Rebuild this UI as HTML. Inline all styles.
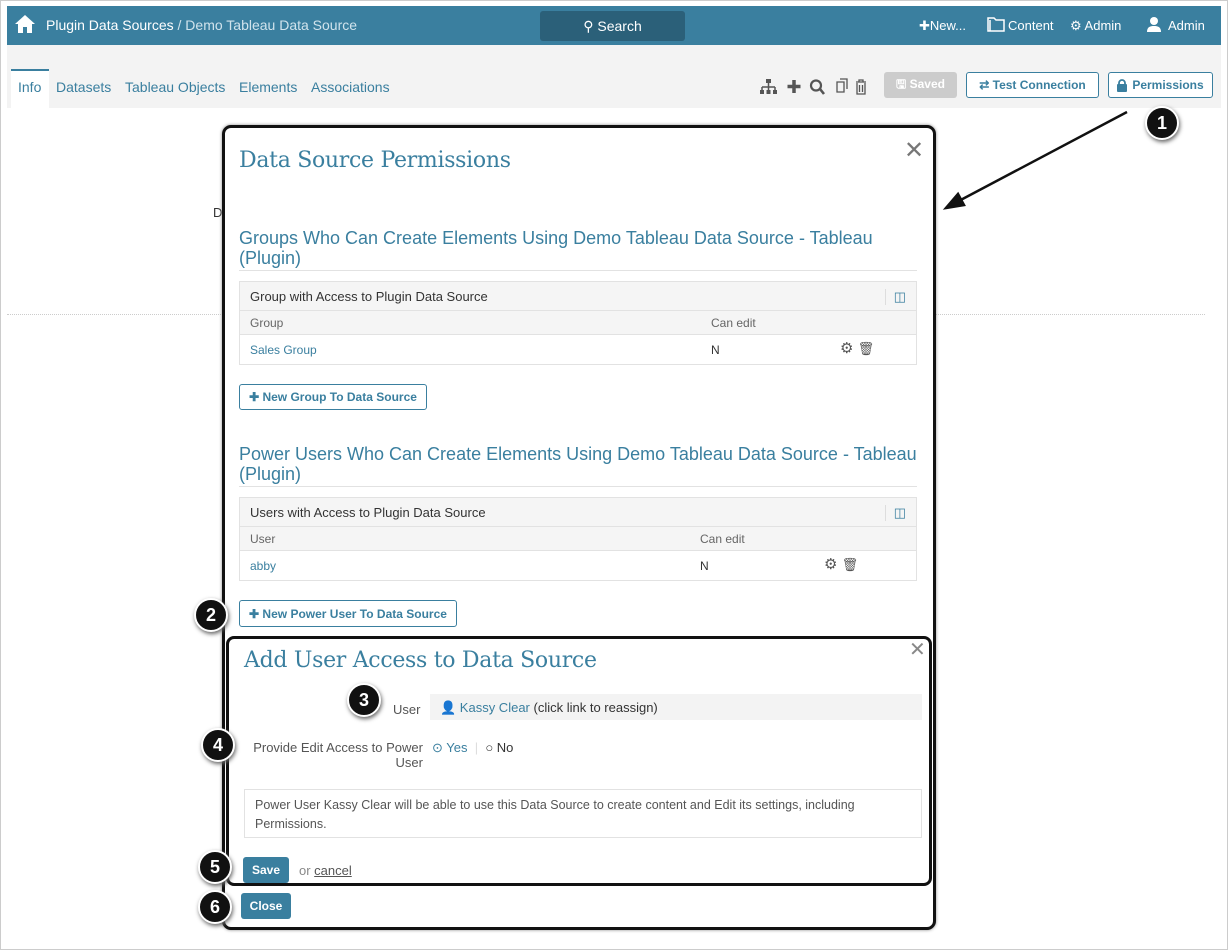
<!DOCTYPE html>
<html><head><meta charset="utf-8"><style>
*{box-sizing:border-box}
body{margin:0;width:1228px;height:950px;background:#fff;font-family:"Liberation Sans",sans-serif;position:relative;overflow:hidden;font-size:13px;color:#333}
.a{position:absolute;white-space:nowrap}
.frame{left:0;top:0;width:1228px;height:950px;border:1px solid #ccc}
.top{left:7px;top:6px;width:1214px;height:39px;background:#3a7f9f;color:#fff}
.gray{left:7px;top:45px;width:1214px;height:63px;background:#f3f3f3}
.tab{top:79px;font-size:14px;color:#3a7f9f}
.btn{border:1px solid #3a7f9f;border-radius:3px;color:#3a7f9f;font-weight:bold;font-size:12px;background:#fff;padding:0 8px;display:flex;align-items:center;justify-content:center;gap:5px;white-space:nowrap}
.modal{left:222px;top:125px;width:714px;height:805px;border:3px solid #111;border-radius:9px;background:#fff;box-shadow:0 0 3px #888}
.serif{font-family:"DejaVu Serif","Liberation Serif",serif;color:#3a7f9f;letter-spacing:-0.3px}
.h2{color:#3a7f9f;font-size:18px;line-height:20px;white-space:normal}
.tbl{border:1px solid #e2e2e2}
.num{width:34px;height:34px;border-radius:50%;background:#111;color:#fff;font-size:18px;font-weight:bold;display:flex;align-items:center;justify-content:center;border:2px solid #fff;box-shadow:1px 2px 4px #666}
.pbtn{background:#3a7f9f;color:#fff;font-weight:bold;font-size:12px;border-radius:3px;display:flex;align-items:center;justify-content:center}
</style></head><body>
<div class="a frame"></div>
<div class="a top">
 <svg class="a" style="left:7px;top:8px" width="22" height="20" viewBox="0 0 22 20"><path d="M11 1L1 10h3v9h5v-6h4v6h5v-9h3z" fill="#fff"/></svg>
 <div class="a" style="left:39px;top:11px;font-size:14px">Plugin Data Sources <span style="color:#d0e3ec">/ Demo Tableau Data Source</span></div>
 <div class="a" style="left:533px;top:5px;width:145px;height:30px;background:#2b6079;border-radius:3px;display:flex;align-items:center;justify-content:center;font-size:14px">⚲&nbsp;Search</div>
 <div class="a" style="left:912px;top:12px;font-size:13px">✚New...</div>
 <svg class="a" style="left:980px;top:11px" width="18" height="15"><path d="M1 1h6l2 2h8v11H1z M3 3v11" fill="none" stroke="#fff" stroke-width="1.5"/></svg>
 <div class="a" style="left:1001px;top:12px;font-size:13px">Content</div>
 <div class="a" style="left:1063px;top:12px;font-size:13px">⚙ Admin</div>
 <svg class="a" style="left:1139px;top:10px" width="16" height="16"><circle cx="8" cy="5" r="4" fill="#fff"/><path d="M1 16c0-5 3-6 7-6s7 1 7 6z" fill="#fff"/></svg>
 <div class="a" style="left:1161px;top:12px;font-size:13px">Admin</div>
</div>
<div class="a gray"></div>
<div class="a" style="left:11px;top:69px;width:38px;height:40px;background:#fff;border-top:2px solid #3a7f9f"></div>
<div class="a tab" style="left:18px">Info</div>
<div class="a tab" style="left:56px">Datasets</div>
<div class="a tab" style="left:125px">Tableau Objects</div>
<div class="a tab" style="left:239px">Elements</div>
<div class="a tab" style="left:311px">Associations</div>
<svg class="a" style="left:760px;top:78px" width="118" height="18" fill="#555" stroke="#555">
 <rect x="6" y="1" width="5" height="4" stroke="none"/><path d="M8.5 5v4M2 9h13M2 9v3M8.5 9v3M15 9v3" fill="none" stroke-width="1.5"/><rect x="0" y="12" width="4" height="4" stroke="none"/><rect x="6.5" y="12" width="4" height="4" stroke="none"/><rect x="13" y="12" width="4" height="4" stroke="none"/>
 <path d="M34 2v13M27.5 8.5h13" stroke-width="3.5" fill="none"/>
 <circle cx="56" cy="7.5" r="5" fill="none" stroke-width="2.2"/><path d="M60 11l4 5" stroke-width="2.6"/>
 <path d="M77 4h7v10h-7zM80 1h7v10" fill="none" stroke-width="1.3"/>
 <path d="M96 4h10M99 4v-2h4v2M97 5v11h8V5M99.5 7v7M102.5 7v7" fill="none" stroke-width="1.3"/>
</svg>
<div class="a pbtn" style="left:884px;top:72px;width:73px;height:26px;background:#ccc">🖫 Saved</div>
<div class="a btn" style="left:966px;top:72px;width:133px;height:26px">⇄ Test Connection</div>
<div class="a btn" style="left:1108px;top:72px;width:105px;height:26px"><svg width="10" height="13"><rect x="0" y="5" width="10" height="8" rx="1" fill="#3a7f9f"/><path d="M2 6V4a3 3 0 0 1 6 0v2" fill="none" stroke="#3a7f9f" stroke-width="1.8"/></svg>Permissions</div>
<div class="a" style="left:7px;top:314px;width:1198px;border-top:1px dotted #ccc"></div>
<div class="a" style="left:213px;top:205px;font-size:13px">D</div>
<svg class="a" style="left:0;top:0" width="1228" height="950"><g stroke="#111" stroke-width="2.5" fill="#111"><line x1="1127" y1="112" x2="955" y2="203"/><path d="M946 208l18-3-6-11z"/><line x1="466" y1="615" x2="505" y2="676"/><path d="M510 685l-2-16-10 6z"/></g></svg>
<div class="a num" style="left:1145px;top:106px">1</div>
<div class="a modal">
 <div class="a serif" style="left:14px;top:20px;font-size:22px">Data Source Permissions</div>
 <div class="a" style="left:679px;top:8px;font-size:24px;color:#777">✕</div>
 <div class="a h2" style="left:14px;top:100px;width:690px">Groups Who Can Create Elements Using Demo Tableau Data Source - Tableau (Plugin)</div>
 <div class="a" style="left:14px;top:142px;width:678px;border-top:1px solid #e2e2e2"></div>
 <div class="a tbl" style="left:14px;top:153px;width:678px;height:84px">
  <div style="height:29px;background:#f5f5f5;border-bottom:1px solid #e2e2e2;padding:7px 10px;font-size:13px">Group with Access to Plugin Data Source<span style="float:right;color:#3a7f9f;border-left:1px solid #ddd;padding-left:8px">◫</span></div>
  <div style="height:24px;background:#f5f5f5;border-bottom:1px solid #e2e2e2;padding:5px 10px;font-size:12px;color:#666;position:relative">Group<span class="a" style="left:471px;top:5px">Can edit</span></div>
  <div style="padding:8px 10px;font-size:12px;color:#3a7f9f;position:relative">Sales Group<span class="a" style="left:471px;top:8px;color:#333">N</span><span class="a" style="left:600px;top:4px;color:#555;font-size:15px">⚙ <span style="font-size:13px">🗑</span></span></div>
 </div>
 <div class="a btn" style="left:14px;top:256px;width:188px;height:26px">✚ New Group To Data Source</div>
 <div class="a h2" style="left:14px;top:316px;width:690px">Power Users Who Can Create Elements Using Demo Tableau Data Source - Tableau (Plugin)</div>
 <div class="a" style="left:14px;top:358px;width:678px;border-top:1px solid #e2e2e2"></div>
 <div class="a tbl" style="left:14px;top:369px;width:678px;height:84px">
  <div style="height:29px;background:#f5f5f5;border-bottom:1px solid #e2e2e2;padding:7px 10px;font-size:13px">Users with Access to Plugin Data Source<span style="float:right;color:#3a7f9f;border-left:1px solid #ddd;padding-left:8px">◫</span></div>
  <div style="height:24px;background:#f5f5f5;border-bottom:1px solid #e2e2e2;padding:5px 10px;font-size:12px;color:#666;position:relative">User<span class="a" style="left:460px;top:5px">Can edit</span></div>
  <div style="padding:8px 10px;font-size:12px;color:#3a7f9f;position:relative">abby<span class="a" style="left:460px;top:8px;color:#333">N</span><span class="a" style="left:584px;top:4px;color:#555;font-size:15px">⚙ <span style="font-size:13px">🗑</span></span></div>
 </div>
 <div class="a btn" style="left:14px;top:472px;width:218px;height:27px">✚ New Power User To Data Source</div>
 <div class="a pbtn" style="left:16px;top:765px;width:50px;height:26px">Close</div>
</div>
<div class="a" style="left:226px;top:636px;width:706px;height:250px;border:3px solid #111;border-radius:8px;background:#fff">
 <div class="a serif" style="left:15px;top:9px;font-size:22px">Add User Access to Data Source</div>
 <div class="a" style="left:680px;top:-2px;font-size:20px;color:#888">✕</div>
 <div class="a" style="left:164px;top:63px;font-size:13px;color:#555">User</div>
 <div class="a" style="left:201px;top:55px;width:492px;height:26px;background:#f3f3f3;padding:6px 10px;font-size:13px"><span style="color:#3a7f9f">👤 Kassy Clear</span> (click link to reassign)</div>
 <div class="a" style="left:20px;top:101px;width:174px;text-align:right;font-size:13px;color:#555;line-height:15px;white-space:normal">Provide Edit Access to Power User</div>
 <div class="a" style="left:203px;top:101px;font-size:13px;color:#3a7f9f">⊙ Yes <span style="color:#ddd">&nbsp;|&nbsp;</span> <span style="color:#333">○ No</span></div>
 <div class="a" style="left:15px;top:150px;width:678px;height:49px;border:1px solid #e2e2e2;padding:6px 10px;font-size:12.5px;color:#555;line-height:19px;white-space:normal">Power User Kassy Clear will be able to use this Data Source to create content and Edit its settings, including Permissions.</div>
 <div class="a pbtn" style="left:14px;top:218px;width:46px;height:26px">Save</div>
 <div class="a" style="left:70px;top:224px;font-size:13px;color:#888">or <u style="color:#555">cancel</u></div>
</div>
<div class="a num" style="left:194px;top:598px">2</div>
<div class="a num" style="left:347px;top:683px">3</div>
<div class="a num" style="left:201px;top:728px">4</div>
<div class="a num" style="left:198px;top:850px">5</div>
<div class="a num" style="left:198px;top:890px">6</div>
</body></html>
